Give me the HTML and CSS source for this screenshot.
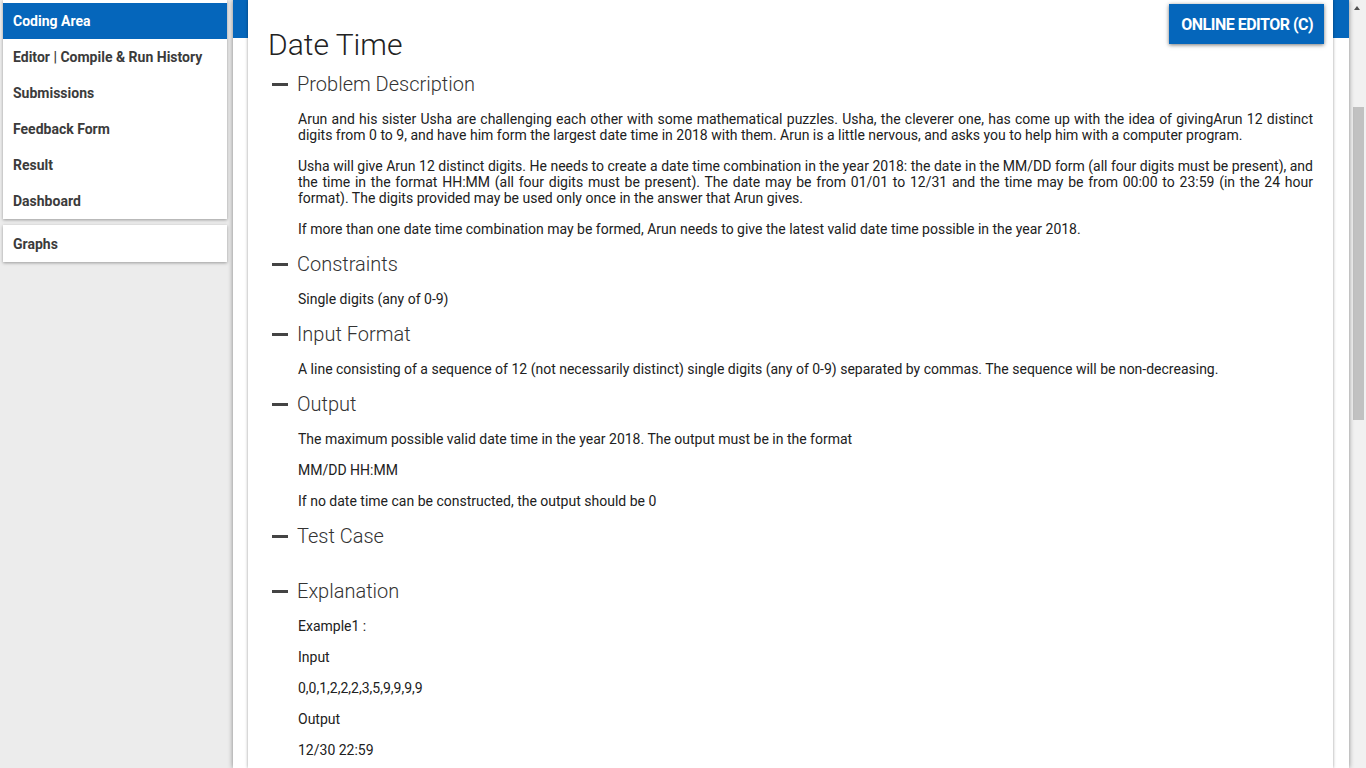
FILE: index.html
```html
<!DOCTYPE html>
<html lang="en">
<head>
<meta charset="utf-8">
<title>Date Time</title>
<link rel="stylesheet" href="styles.css">
</head>
<body>
<div class="layout">
  <aside class="sidebar">
    <nav class="side-card side-card-main">
      <div class="side-item active">Coding Area</div>
      <div class="side-item">Editor | Compile &amp; Run History</div>
      <div class="side-item">Submissions</div>
      <div class="side-item">Feedback Form</div>
      <div class="side-item">Result</div>
      <div class="side-item">Dashboard</div>
    </nav>
    <nav class="side-card side-card-graphs">
      <div class="side-item">Graphs</div>
    </nav>
  </aside>

  <main class="main">
    <article class="card">
      <div class="title-row">
        <h1 class="title">Date Time</h1>
        <button class="editor-btn">ONLINE EDITOR (C)</button>
      </div>

      <section class="section">
        <h2 class="sec-head"><span class="dash"></span>Problem Description</h2>
        <div class="sec-body">
          <p>Arun and his sister Usha are challenging each other with some mathematical puzzles. Usha, the cleverer one, has come up with the idea of givingArun 12 distinct digits from 0 to 9, and have him form the largest date time in 2018 with them. Arun is a little nervous, and asks you to help him with a computer program.</p>
          <p>Usha will give Arun 12 distinct digits. He needs to create a date time combination in the year 2018: the date in the MM/DD form (all four digits must be present), and the time in the format HH:MM (all four digits must be present). The date may be from 01/01 to 12/31 and the time may be from 00:00 to 23:59 (in the 24 hour format). The digits provided may be used only once in the answer that Arun gives.</p>
          <p>If more than one date time combination may be formed, Arun needs to give the latest valid date time possible in the year 2018.</p>
        </div>
      </section>

      <section class="section">
        <h2 class="sec-head"><span class="dash"></span>Constraints</h2>
        <div class="sec-body">
          <p>Single digits (any of 0-9)</p>
        </div>
      </section>

      <section class="section">
        <h2 class="sec-head"><span class="dash"></span>Input Format</h2>
        <div class="sec-body">
          <p>A line consisting of a sequence of 12 (not necessarily distinct) single digits (any of 0-9) separated by commas. The sequence will be non-decreasing.</p>
        </div>
      </section>

      <section class="section">
        <h2 class="sec-head"><span class="dash"></span>Output</h2>
        <div class="sec-body">
          <p>The maximum possible valid date time in the year 2018. The output must be in the format</p>
          <p>MM/DD HH:MM</p>
          <p>If no date time can be constructed, the output should be 0</p>
        </div>
      </section>

      <section class="section">
        <h2 class="sec-head"><span class="dash"></span>Test Case</h2>
        <div class="sec-body">
          <div class="empty"></div>
        </div>
      </section>

      <section class="section">
        <h2 class="sec-head"><span class="dash"></span>Explanation</h2>
        <div class="sec-body">
          <p>Example1 :</p>
          <p>Input</p>
          <p>0,0,1,2,2,2,3,5,9,9,9,9</p>
          <p>Output</p>
          <p>12/30 22:59</p>
        </div>
      </section>
    </article>
  </main>

  <div class="scrollbar">
    <div class="scroll-arrow"></div>
    <div class="scroll-thumb"></div>
  </div>
</div>
</body>
</html>
```

FILE: styles.css
```css
html, body {
  margin: 0;
  padding: 0;
  height: 768px;
  overflow: hidden;
}

body {
  font-family: Roboto, "Liberation Sans", Arial, sans-serif;
  background: #ececec;
  color: #212121;
}

.layout {
  display: flex;
  height: 768px;
}

/* ---------- sidebar ---------- */
.sidebar {
  width: 233px;
  flex: 0 0 233px;
  box-sizing: border-box;
  padding-left: 3px;
  background: #ececec;
}

.side-card {
  width: 224px;
  background: #fff;
  box-shadow: 0 1px 3px rgba(0, 0, 0, 0.35);
}

.side-card-main {
  padding-top: 3px;
}

.side-card-graphs {
  margin-top: 6px;
}

.side-item {
  height: 36px;
  line-height: 36px;
  padding-left: 10px;
  font-size: 14px;
  font-weight: 700;
  color: #3b3b3b;
  white-space: nowrap;
}

.side-card-graphs .side-item {
  height: 37px;
  line-height: 38px;
}

.side-item.active {
  background: #0566bb;
  color: #fff;
}

/* ---------- main ---------- */
.main {
  width: 1116px;
  flex: 0 0 1116px;
  box-sizing: border-box;
  padding: 0 16px 0 15px;
  background: linear-gradient(#0566bb 0, #0566bb 38px, #fff 38px);
  box-shadow: 0 0 5px rgba(0, 0, 0, 0.45);
  position: relative;
  z-index: 1;
}

.card {
  height: 768px;
  box-sizing: border-box;
  background: #fff;
  box-shadow: 0 0 3px rgba(0, 0, 0, 0.4);
  padding: 0 9px 0 20px;
  overflow: hidden;
}

.title-row {
  display: flex;
  justify-content: space-between;
  align-items: flex-start;
  margin-bottom: 9px;
}

.title {
  margin: 27px 0 0 0;
  font-size: 30px;
  line-height: 36px;
  font-weight: 300;
  color: #222;
}

.editor-btn {
  margin-top: 4px;
  height: 40px;
  padding: 0 11px 0 12px;
  border: 0;
  background: #0566bb;
  color: #fff;
  font-family: Roboto, "Liberation Sans", Arial, sans-serif;
  font-size: 16px;
  font-weight: 700;
  letter-spacing: -0.5px;
  box-shadow: 0 1px 4px rgba(0, 0, 0, 0.55);
  cursor: pointer;
}

.section {
  margin-right: 11px;
}

.sec-head {
  display: flex;
  align-items: center;
  margin: 0 0 15px 0;
  font-size: 20px;
  line-height: 24px;
  font-weight: 300;
  color: #333;
}

.dash {
  display: block;
  width: 16px;
  height: 3px;
  margin: 1px 9px 0 4px;
  background: #444;
}

.sec-body {
  padding-left: 30px;
  font-size: 14px;
  line-height: 16px;
  text-align: justify;
  color: #212121;
}

.sec-body p {
  margin: 0 0 15px 0;
}

.empty {
  height: 1px;
  margin-bottom: 15px;
}

/* ---------- scrollbar ---------- */
.scrollbar {
  flex: 1 1 auto;
  background: #f1f1f1;
  display: flex;
  flex-direction: column;
  align-items: flex-start;
}

.scroll-arrow {
  width: 0;
  height: 0;
  margin: 6px 0 0 5px;
  border-left: 3.5px solid transparent;
  border-right: 3.5px solid transparent;
  border-bottom: 4px solid #505050;
}

.scroll-thumb {
  width: 11px;
  height: 313px;
  margin: 97px 0 0 4px;
  background: #c1c1c1;
}
```
